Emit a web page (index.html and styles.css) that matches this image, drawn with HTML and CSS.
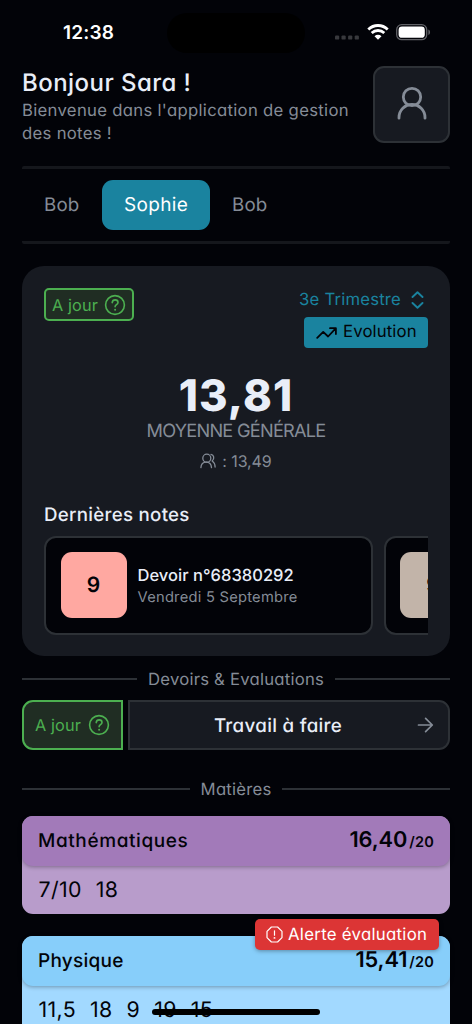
FILE: index.html
```html
<!DOCTYPE html>
<html lang="fr">
<head>
<meta charset="utf-8">
<title>Notes</title>
<link rel="stylesheet" href="styles.css">
</head>
<body>
<div class="screen">
  <div class="status">
    <span class="clock">12:38</span>
    <span class="island"></span>
    <div class="status-icons">
      <svg width="25" height="5" viewBox="0 0 25 5" fill="#38393d"><rect x="0" y="0.4" width="4.2" height="4.2" rx="1.2"/><rect x="6.5" y="0.4" width="4.2" height="4.2" rx="1.2"/><rect x="13.1" y="0.4" width="4.2" height="4.2" rx="1.2"/><rect x="19.7" y="0.4" width="4.2" height="4.2" rx="1.2"/></svg>
      <svg class="wifi" width="22" height="16" viewBox="0 0 22 16" fill="none" stroke="#fff" stroke-width="2.8"><path d="M1.3 5.4a14 14 0 0 1 19.4 0"/><path d="M4.7 9a9.2 9.2 0 0 1 12.6 0"/><path d="M11 15.7 7.5 12.2a5 5 0 0 1 7 0z" fill="#fff" stroke="none"/></svg>
      <svg class="battery" width="35" height="17" viewBox="0 0 35 17"><rect x=".7" y=".7" width="30" height="15" rx="5" fill="none" stroke="#606166" stroke-width="1.3"/><rect x="2.6" y="2.6" width="26.2" height="11.2" rx="3.4" fill="#fff"/><path d="M32.4 5.5c2.2.9 2.2 4.6 0 5.5z" fill="#606166"/></svg>
    </div>
  </div>

  <header class="header">
    <div class="greeting">
      <h1>Bonjour Sara !</h1>
      <p>Bienvenue dans l'application de gestion<br>des notes !</p>
    </div>
    <div class="avatar">
      <svg width="32" height="36" viewBox="0 0 32 36" fill="none" stroke="#858c97" stroke-width="2.8" stroke-linecap="round"><circle cx="16" cy="11" r="8.7"/><path d="M3 32.2v-.7a13 13 0 0 1 26 0v.7"/></svg>
    </div>
  </header>

  <nav class="tabs">
    <span class="tab">Bob</span>
    <span class="tab tab-active">Sophie</span>
    <span class="tab">Bob</span>
  </nav>

  <section class="summary">
    <div class="summary-top">
      <div class="badge">
        <span class="ok">A jour</span>
        <svg class="help" viewBox="0 0 22 22"><circle cx="11" cy="11" r="9.4"/><path d="M8.2 8.6c.2-1.7 1.3-2.7 2.9-2.7 1.7 0 2.9 1 2.9 2.5 0 2.3-2.9 2.3-2.9 4.4"/><circle class="dot" cx="11.1" cy="15.7" r="1"/></svg>
      </div>
      <div class="period">
        <div class="term"><span>3e Trimestre</span>
          <svg width="13" height="18" viewBox="0 0 13 18" fill="none" stroke="#1a839f" stroke-width="1.9" stroke-linecap="round" stroke-linejoin="round"><path d="M1.5 6 6.5 1.3 11.5 6M1.5 12l5 4.7 5-4.7"/></svg>
        </div>
        <div class="evolution">
          <svg width="21" height="12" viewBox="0 0 21 12" fill="none" stroke="#020308" stroke-width="1.8" stroke-linecap="round" stroke-linejoin="round"><path d="M1.2 10.8 7.2 4.9l4.9 4.6 7.6-8.1M14 1.2h5.900v5.900"/></svg>
          <span>Evolution</span>
        </div>
      </div>
    </div>
    <div class="average">13,81</div>
    <div class="average-label">MOYENNE GÉNÉRALE</div>
    <div class="class-average">
      <svg width="16" height="16" viewBox="0 0 16 16" fill="none" stroke="#858c97" stroke-width="1.3" stroke-linecap="round"><circle cx="6.8" cy="5.2" r="4"/><path d="M.9 14.6C1.1 11.300 3.200 9.200 6.200 9.200s5.100 2.100 5.300 5.400M11 1.300c2.900.3 3.800 4.600 1.200 6.700 1.800 1.200 2.900 3.300 2.900 6"/></svg>
      <span>: 13,49</span>
    </div>
    <h2>Dernières notes</h2>
    <div class="notes">
      <article class="note">
        <div class="mark mark-pink">9</div>
        <div><div class="note-title">Devoir n°68380292</div><div class="note-date">Vendredi 5 Septembre</div></div>
      </article>
      <article class="note">
        <div class="mark mark-sand">9</div>
      </article>
    </div>
  </section>

  <div class="divider divider-work"><span>Devoirs &amp; Evaluations</span></div>
  <div class="work">
    <div class="work-status">
      <span class="ok">A jour</span>
      <svg class="help" viewBox="0 0 22 22"><circle cx="11" cy="11" r="9.4"/><path d="M8.2 8.6c.2-1.7 1.3-2.7 2.9-2.7 1.7 0 2.9 1 2.9 2.5 0 2.3-2.9 2.3-2.9 4.4"/><circle class="dot" cx="11.1" cy="15.7" r="1"/></svg>
    </div>
    <div class="work-link"><span>Travail à faire</span>
      <svg width="17" height="16" viewBox="0 0 17 16" fill="none" stroke="#858c97" stroke-width="1.7" stroke-linecap="round" stroke-linejoin="round"><path d="M1.5 8h13.7M8.6 1.3 15.3 8l-6.7 6.7"/></svg>
    </div>
  </div>

  <div class="divider divider-subjects"><span>Matières</span></div>
  <article class="subject maths">
    <div class="subject-head"><span class="subject-name">Mathématiques</span><span class="score">16,40<small>/20</small></span></div>
    <div class="marks"><span>7/10</span><span>18</span></div>
  </article>
  <article class="subject physics">
    <div class="subject-head"><span class="subject-name">Physique</span><span class="score">15,41<small>/20</small></span></div>
    <div class="marks"><span>11,5</span><span>18</span><span>9</span><span>19</span><span>15</span></div>
    <div class="alert">
      <svg width="17" height="17" viewBox="0 0 17 17" fill="none" stroke="#fff" stroke-width="1.2" stroke-linejoin="round" stroke-linecap="round"><path d="M5.4 1h6.200L16 5.400v6.200L11.600 16H5.400L1 11.600V5.400z"/><path d="M8.500 4.800v4.400"/><circle cx="8.500" cy="11.900" r=".35"/></svg>
      <span>Alerte évaluation</span>
    </div>
  </article>
  <div class="home-bar"></div>
</div>
</body>
</html>
```

FILE: styles.css
```css
* { box-sizing: border-box; }
body {
  margin: 0;
  background: #020308;
  font-family: Inter, "Liberation Sans", sans-serif;
  font-feature-settings: "cv11";
  text-rendering: geometricPrecision;
  color: #e9eef8;
}
svg { display: block; flex: none; }
h1, h2, p { margin: 0; }
.screen { position: relative; width: 472px; height: 1024px; overflow: hidden; padding: 0 22px; }

.status { height: 66px; margin: 0 -22px; display: grid; grid-template-columns: 167px 138px 1fr; align-items: start; }
.clock { padding: 21px 0 0 63px; font-size: 19px; line-height: 24px; font-weight: 600; letter-spacing: .2px; color: #fff; }
.island { height: 40px; margin-top: 13px; border-radius: 20px; background: #000; }
.status-icons { display: flex; align-items: flex-start; padding: 24px 0 0 30px; }
.status-icons svg:first-child { margin-top: 11px; }
.wifi { margin-left: 7px; }
.battery { margin-left: 7px; }

.header { height: 77px; display: flex; justify-content: space-between; }
.greeting { padding-top: 1px; }
h1 { font-size: 24px; line-height: 31px; font-weight: 500; letter-spacing: .45px; }
.greeting p { margin-top: 2px; font-size: 16.7px; line-height: 23px; letter-spacing: .3px; color: #858c97; white-space: nowrap; }
.avatar { width: 77px; height: 77px; border: 2px solid #2d3136; border-radius: 11px; background: #171a21; display: grid; place-items: center; }
.avatar svg { margin-top: -2px; }

.tabs { height: 78px; margin-top: 23px; border: solid #15171c; border-width: 3px 0; display: flex; align-items: center; border-radius: 2px; }
.tab { width: 80px; height: 50px; line-height: 50px; padding-left: 22px; font-size: 18.7px; letter-spacing: .2px; color: #858c97; border-radius: 11px; white-space: nowrap; }
.tab-active { width: 108px; padding: 0; text-align: center; background: #1a839f; color: #fff; font-size: 19px; letter-spacing: .35px; }

.summary { height: 390px; margin-top: 22px; padding: 22px; border-radius: 22px; background: #171a21; display: flex; flex-direction: column; }
.summary > * { flex: none; }
.summary-top { display: flex; justify-content: space-between; align-items: flex-start; height: 60px; }
.badge { width: 90px; height: 33px; border: 2px solid #4caf50; border-radius: 5px; background: #202d23; display: flex; align-items: center; justify-content: space-between; padding: 0 6px; }
.ok { font-size: 16.3px; letter-spacing: .1px; color: #4caf50; }
.help { width: 22px; height: 22px; fill: none; stroke: #4caf50; stroke-width: 1.6; stroke-linecap: round; stroke-linejoin: round; }
.help .dot { fill: #4caf50; stroke: none; }
.period { display: flex; flex-direction: column; align-items: flex-end; }
.term { height: 29px; display: flex; align-items: center; gap: 10px; padding: 0 4px 5px 0; font-size: 16.7px; letter-spacing: .2px; color: #1a839f; }
.evolution { width: 124px; height: 31px; border-radius: 4px; background: #1a839f; color: #020308; display: flex; align-items: center; gap: 6px; padding-left: 12px; font-size: 16.8px; letter-spacing: .1px; }
.evolution span { margin-top: -1px; }
.average { margin-top: 23px; height: 50px; line-height: 50px; text-align: center; font-size: 43.5px; font-weight: 800; letter-spacing: 1.1px; }
.average-label { height: 20px; line-height: 20px; text-align: center; font-size: 18.2px; letter-spacing: -.75px; color: #858c97; }
.class-average { height: 20px; margin-top: 10px; display: flex; align-items: center; justify-content: center; gap: 6px; font-size: 16px; color: #858c97; letter-spacing: -.1px; }
h2 { margin-top: 33px; height: 22px; font-size: 18.7px; line-height: 22px; font-weight: 500; letter-spacing: .28px; }
.notes { display: flex; gap: 11px; margin-top: 10px; overflow: hidden; }
.note { flex: none; width: 329px; height: 99px; border: 2px solid #2d3136; border-radius: 12px; background: #020308; display: flex; align-items: center; gap: 11px; padding: 0 14.5px 1px; }
.note + .note { padding-left: 14px; }
.mark { flex: none; width: 66px; height: 66px; border-radius: 11px; display: grid; place-items: center; color: #020308; font-size: 21px; font-weight: 600; }
.mark-pink { background: #ffa8a1; }
.mark-sand { background: #c2b4a9; }
.note-title { font-size: 16.5px; line-height: 22px; font-weight: 500; letter-spacing: .03px; }
.note-date { position: relative; top: 1px; font-size: 14.7px; line-height: 20px; letter-spacing: .25px; color: #858c97; }

.divider { display: flex; align-items: center; gap: 11px; height: 22px; font-size: 16.7px; letter-spacing: .22px; color: #858c97; white-space: nowrap; }
.divider span { padding-top: 1px; }
.divider::before, .divider::after { content: ""; flex: 1; height: 2px; background: #2d3136; }
.divider-work { margin-top: 12px; }
.divider-subjects { margin-top: 28px; }

.work { display: flex; gap: 5px; height: 50px; margin-top: 10px; }
.work-status { width: 101px; border: 2px solid #4caf50; border-radius: 11px 0 0 11px; background: #202d23; display: flex; align-items: center; justify-content: space-between; padding: 0 11px; }
.work-link { flex: 1; border: 2px solid #2d3136; border-radius: 0 11px 11px 0; background: #171a21; display: grid; grid-template-columns: 1fr auto; align-items: center; padding: 0 14px; }
.work-link span { padding-right: 5px; text-align: center; font-size: 18.8px; font-weight: 500; letter-spacing: .3px; }

.subject { position: relative; height: 98px; border-radius: 11px; color: #020308; }
.maths { margin-top: 16px; background: #b89ccb; }
.physics { margin-top: 22px; background: #a2d9ff; }
.subject-head { height: 50px; border-radius: 11px; box-shadow: 0 1px 4px rgba(0, 0, 0, .32); display: flex; align-items: center; justify-content: space-between; padding: 0 16px 2px; }
.maths .subject-head { background: #a27ab9; }
.physics .subject-head { background: #87cefa; }
.subject-name { font-size: 19px; font-weight: 500; letter-spacing: .6px; }
.physics .subject-name { letter-spacing: .25px; }
.score { font-size: 21.8px; font-weight: 600; letter-spacing: -.1px; }
.score small { margin-left: 2px; font-size: 14.5px; letter-spacing: .2px; }
.marks { display: flex; gap: 14px; height: 48px; align-items: center; padding-left: 16.5px; font-size: 21.3px; letter-spacing: .35px; }
.alert { position: absolute; right: 11px; top: -17px; width: 184px; height: 31px; border-radius: 5px; background: #dc3535; color: #fff; box-shadow: 0 1px 4px rgba(0, 0, 0, .35); display: flex; align-items: center; gap: 5px; padding-left: 11px; font-size: 16.8px; letter-spacing: .28px; white-space: nowrap; }
.home-bar { position: absolute; left: 152px; top: 1009px; width: 168px; height: 6px; border-radius: 3px; background: #000; }
```
